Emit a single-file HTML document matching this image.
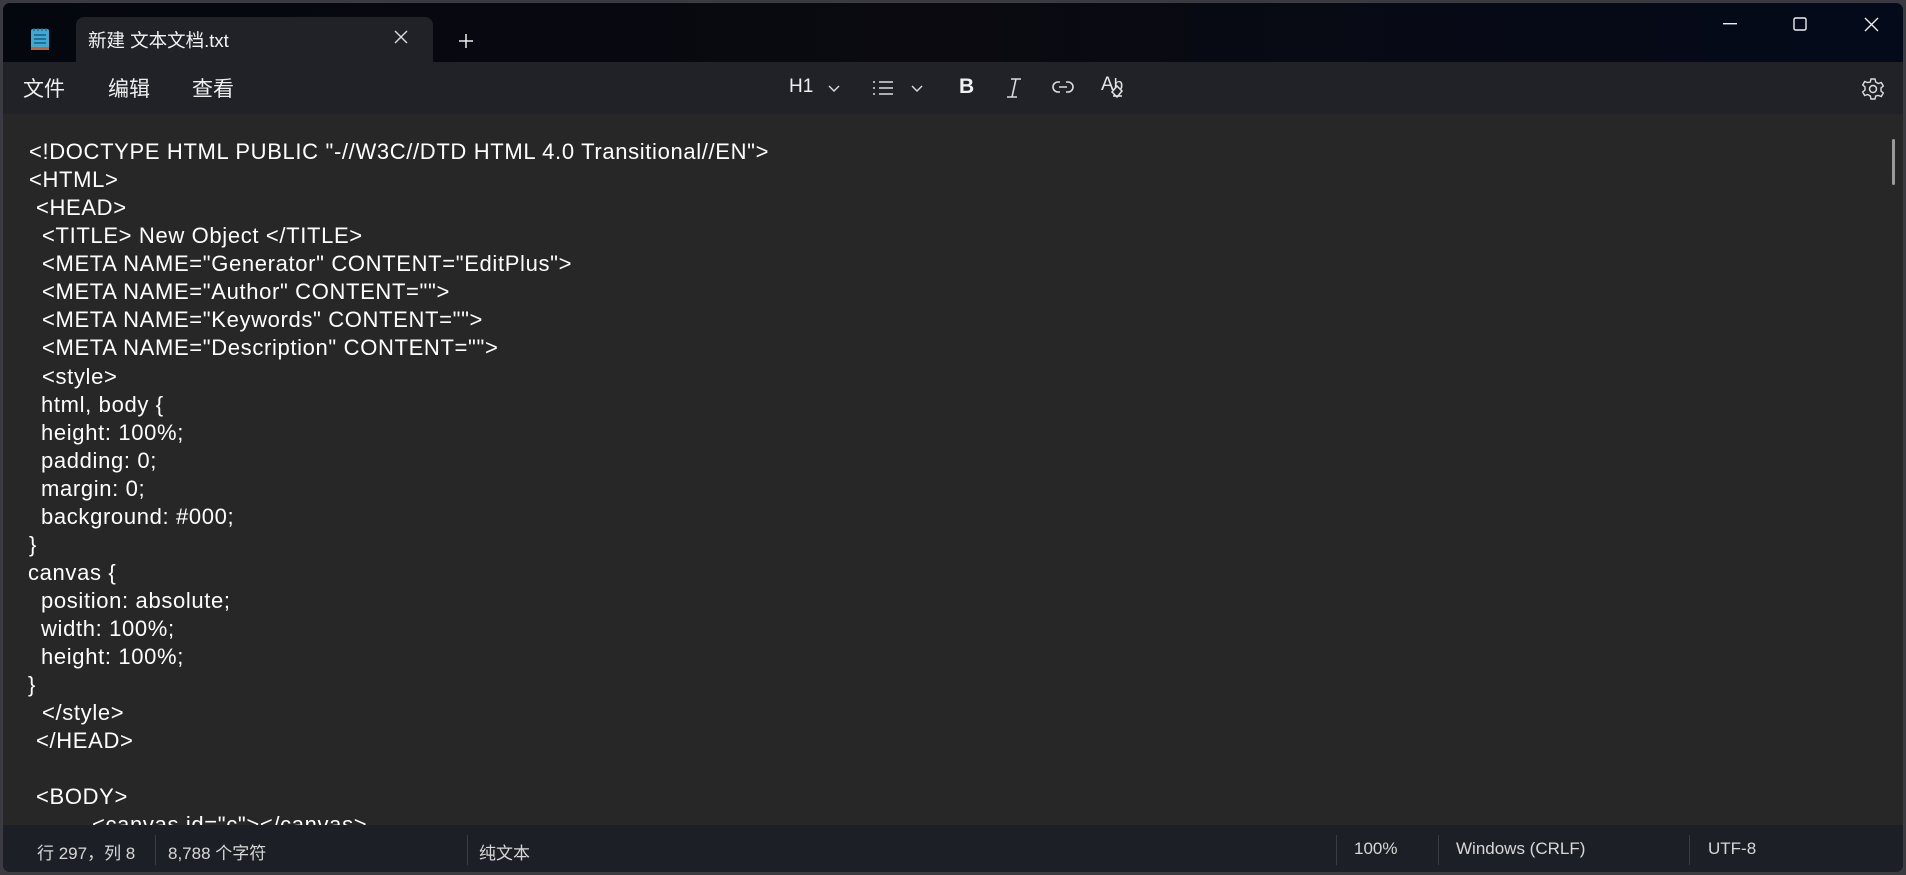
<!DOCTYPE html>
<html><head><meta charset="utf-8">
<style>
*{margin:0;padding:0;box-sizing:border-box}
body{width:1906px;height:875px;overflow:hidden;background:#3a3a40;font-family:"Segoe UI","Liberation Sans","Noto Sans CJK SC",sans-serif;color:#fff;position:relative}
.win{position:absolute;left:2px;top:2px;width:1902px;height:871px;border-radius:8px;overflow:hidden;background:#272727;border:1px solid #3c3c44}
.title{position:absolute;left:0;top:0;width:100%;height:60px;background:linear-gradient(90deg,#05070f,#0a0a10 50%,#040a1a)}
.tab{position:absolute;left:73px;top:14px;width:357px;height:47px;background:#202228;border-radius:8px 8px 0 0}
.menu{position:absolute;left:0;top:59px;width:100%;height:52px;background:#202228}
.editor{position:absolute;left:0;top:111px;width:100%;height:711px;background:#272727;overflow:hidden}
.status{position:absolute;left:0;top:822px;width:100%;height:49px;background:#1d1f27}
.t{position:absolute;white-space:pre;font-size:22px;letter-spacing:0.65px;line-height:28px}
.s{position:absolute;font-size:17px;color:#d8d8d8;top:14px;white-space:pre}
.sep{position:absolute;top:10px;width:1px;height:30px;background:#3a3c45}
.m{position:absolute;font-size:21px;top:11px;color:#f0f0f0}
svg{position:absolute}
</style></head><body>
<div class="win">
<div class="title">
 <svg style="left:27px;top:24px" width="20" height="24" viewBox="0 0 20 24"><rect x="1" y="2" width="18" height="20" rx="2" fill="#3fa9d4"/><rect x="1" y="20" width="18" height="3" fill="#c8622a"/><path d="M4 8h12M4 12h12M4 16h12" stroke="#1b5d80" stroke-width="1.6"/><path d="M4 1v3M8 1v3M12 1v3M16 1v3" stroke="#1b5d80" stroke-width="1.2"/></svg>
 <div class="tab"><div style="position:absolute;left:12px;top:10px;font-size:18.5px;color:#f4f4f4">新建 文本文档.txt</div>
  <svg style="left:318px;top:13px" width="14" height="14" viewBox="0 0 14 14"><path d="M1 1L13 13M13 1L1 13" stroke="#ddd" stroke-width="1.4"/></svg></div>
 <svg style="left:455px;top:30px" width="16" height="16" viewBox="0 0 16 16"><path d="M8 1v14M1 8h14" stroke="#eee" stroke-width="1.5"/></svg>
 <svg style="left:1720px;top:20px" width="14" height="2"><rect width="14" height="1.4" fill="#eee"/></svg>
 <svg style="left:1790px;top:14px" width="14" height="14" viewBox="0 0 14 14"><rect x="1" y="1" width="12" height="12" rx="1.5" fill="none" stroke="#eee" stroke-width="1.4"/></svg>
 <svg style="left:1861px;top:14px" width="15" height="15" viewBox="0 0 15 15"><path d="M1 1L14 14M14 1L1 14" stroke="#eee" stroke-width="1.4"/></svg>
</div>
<div class="menu">
 <div class="m" style="left:20px">文件</div><div class="m" style="left:105px">编辑</div><div class="m" style="left:189px">查看</div>
 <div class="m" style="left:786px;font-size:19px;top:14px">H1</div>
 <svg style="left:825px;top:23px" width="12" height="8" viewBox="0 0 12 8"><path d="M1 1l5 5 5-5" stroke="#ddd" fill="none" stroke-width="1.4"/></svg>
 <svg style="left:869px;top:18px" width="22" height="16" viewBox="0 0 22 16"><path d="M1 2h2M1 8h2M1 14h2M7 2h14M7 8h14M7 14h14" stroke="#ddd" stroke-width="1.6"/></svg>
 <svg style="left:908px;top:23px" width="12" height="8" viewBox="0 0 12 8"><path d="M1 1l5 5 5-5" stroke="#ddd" fill="none" stroke-width="1.4"/></svg>
 <div class="m" style="left:956px;font-weight:bold;font-size:21px;top:13px">B</div>
 <svg style="left:1002px;top:16px" width="18" height="20" viewBox="0 0 18 20"><path d="M6 1h10M2 19h10M11 1L7 19" stroke="#ddd" stroke-width="1.6" fill="none"/></svg>
 <svg style="left:1049px;top:18px" width="22" height="14" viewBox="0 0 22 14"><path d="M8 2H6a5 5 0 000 10h2M14 2h2a5 5 0 010 10h-2M7 7h8" stroke="#ddd" stroke-width="1.6" fill="none"/></svg>
 <div style="position:absolute;left:1098px;top:12px;font-size:19px;color:#e4e4e4">A<span style="font-size:17px">b</span></div>
 <svg style="left:1104px;top:20px" width="20" height="20" viewBox="0 0 20 20"><path d="M10 4l5 5-5 6-5-5z" stroke="#e4e4e4" fill="#202228" stroke-width="1.5"/><path d="M6 14h9" stroke="#e4e4e4" stroke-width="1.4"/></svg>
 <svg style="left:1858px;top:15px" width="24" height="24" viewBox="0 0 24 24"><circle cx="12" cy="12" r="3.5" stroke="#ddd" fill="none" stroke-width="1.5"/><path d="M10 2h4l.7 3 2.6 1.5 3-1 2 3.5-2.3 2v3l2.3 2-2 3.5-3-1L14.7 19 14 22h-4l-.7-3-2.6-1.5-3 1-2-3.5 2.3-2v-3l-2.3-2 2-3.5 3 1L9.3 5z" stroke="#ddd" fill="none" stroke-width="1.4"/></svg>
</div>
<div class="editor">
<div class="t" style="left:26px;top:24px">&lt;!DOCTYPE HTML PUBLIC "-//W3C//DTD HTML 4.0 Transitional//EN"&gt;</div>
<div class="t" style="left:26px;top:52px">&lt;HTML&gt;</div>
<div class="t" style="left:33px;top:80px">&lt;HEAD&gt;</div>
<div class="t" style="left:39px;top:108px">&lt;TITLE&gt; New Object &lt;/TITLE&gt;</div>
<div class="t" style="left:39px;top:136px">&lt;META NAME="Generator" CONTENT="EditPlus"&gt;</div>
<div class="t" style="left:39px;top:164px">&lt;META NAME="Author" CONTENT=""&gt;</div>
<div class="t" style="left:39px;top:192px">&lt;META NAME="Keywords" CONTENT=""&gt;</div>
<div class="t" style="left:39px;top:220px">&lt;META NAME="Description" CONTENT=""&gt;</div>
<div class="t" style="left:39px;top:249px">&lt;style&gt;</div>
<div class="t" style="left:38px;top:277px">html, body {</div>
<div class="t" style="left:38px;top:305px">height: 100%;</div>
<div class="t" style="left:38px;top:333px">padding: 0;</div>
<div class="t" style="left:38px;top:361px">margin: 0;</div>
<div class="t" style="left:38px;top:389px">background: #000;</div>
<div class="t" style="left:26px;top:417px">}</div>
<div class="t" style="left:25px;top:445px">canvas {</div>
<div class="t" style="left:38px;top:473px">position: absolute;</div>
<div class="t" style="left:38px;top:501px">width: 100%;</div>
<div class="t" style="left:38px;top:529px">height: 100%;</div>
<div class="t" style="left:25px;top:557px">}</div>
<div class="t" style="left:39px;top:585px">&lt;/style&gt;</div>
<div class="t" style="left:33px;top:613px">&lt;/HEAD&gt;</div>
<div class="t" style="left:33px;top:669px">&lt;BODY&gt;</div>
<div class="t" style="left:89px;top:697px">&lt;canvas id="c"&gt;&lt;/canvas&gt;</div>
<div style="position:absolute;left:1889px;top:25px;width:3px;height:46px;border-radius:2px;background:#9a9a9a"></div>
</div>
<div class="status">
 <div class="s" style="left:34px">行 297，列 8</div><div class="sep" style="left:152px"></div>
 <div class="s" style="left:165px">8,788 个字符</div><div class="sep" style="left:464px"></div>
 <div class="s" style="left:476px">纯文本</div><div class="sep" style="left:1333px"></div>
 <div class="s" style="left:1351px">100%</div><div class="sep" style="left:1435px"></div>
 <div class="s" style="left:1453px">Windows (CRLF)</div><div class="sep" style="left:1686px"></div>
 <div class="s" style="left:1705px">UTF-8</div>
</div>
</div>
</body></html>
